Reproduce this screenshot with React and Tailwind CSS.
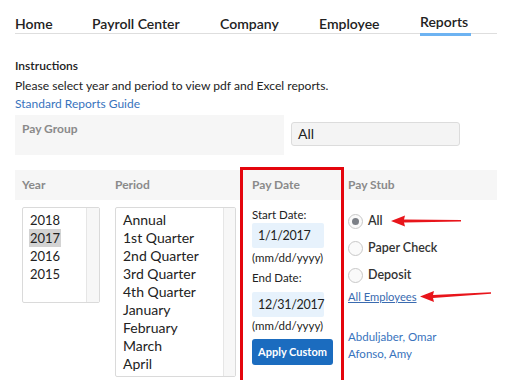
import React from 'react';

const years = ['2018', '2017', '2016', '2015'];
const periods = ['Annual', '1st Quarter', '2nd Quarter', '3rd Quarter', '4th Quarter', 'January', 'February', 'March', 'April'];
const navItems = [
  { label: 'Home', w: 'w-[77px]' },
  { label: 'Payroll Center', w: 'w-[128px]' },
  { label: 'Company', w: 'w-[99px]' },
  { label: 'Employee', w: 'w-[101px]' },
];

function Radio({ checked, label }) {
  return (
    <label className="flex items-center gap-[5px] h-[16px]">
      <span className="w-[15px] h-[15px] rounded-full border border-[#c8c8c8] bg-[#fafafa] flex items-center justify-center">
        {checked && <span className="w-[7px] h-[7px] rounded-full bg-[#7b7f86]" />}
      </span>
      <span className="text-[12.5px] font-semibold text-[#333]">{label}</span>
    </label>
  );
}

function Arrows() {
  // annotation arrows drawn over the screenshot
  return (
    <svg className="absolute left-0 top-0 pointer-events-none" width="509" height="380" aria-hidden="true">
      <path d="M391 221 L405 215.5 L404 219.5 L461 220 L461 221.5 L404 222.5 L405 226.5 Z" fill="#e8151b" />
      <path d="M420 296.5 L434 291 L433 295 L491 292.3 L491 293.8 L433 298 L434 302 Z" fill="#e8151b" />
    </svg>
  );
}

export default function App() {
  return (
    <div className="relative w-[509px] h-[380px] overflow-hidden bg-white text-[#222] font-['Lato','Open_Sans',sans-serif]">
      {/* tabs */}
      <nav className="ml-[15px] mt-[13px] w-[482px] h-[21px] border-b border-[#dedede] flex items-end">
        {navItems.map((n) => (
          <div key={n.label} className={`${n.w} text-[14px] font-semibold leading-[18px] whitespace-nowrap`}>
            {n.label}
          </div>
        ))}
        <div className="relative text-[14px] font-semibold leading-[18px] pb-[2px] whitespace-nowrap">
          Reports
          <div className="absolute left-0 right-[-3px] bottom-[-3px] h-[3px] bg-[#6db3f2]" />
        </div>
      </nav>

      {/* instructions */}
      <div className="ml-[15px] mt-[24px]">
        <div className="text-[12px] font-semibold leading-[16px]">Instructions</div>
        <div className="text-[12.1px] leading-[18px] mt-[3px]">Please select year and period to view pdf and Excel reports.</div>
        <a className="block text-[12px] leading-[17px] text-[#3873bd]">Standard Reports Guide</a>
      </div>

      {/* pay group */}
      <div className="flex ml-[15px] mt-[3px]">
        <div className="w-[269px] h-[40px] bg-[#f6f6f6] px-[7px] pt-[5px] text-[12px] font-bold text-[#8a8a8a]">Pay Group</div>
        <div className="ml-[7px] mt-[7px] w-[169px] h-[24px] rounded-[3px] border border-[#dcdcdc] bg-[#f4f4f4] px-[6px] text-[14px] leading-[22px]">All</div>
      </div>

      {/* column headers */}
      <div className="ml-[15px] mt-[15px] w-[482px] h-[30px] bg-[#f6f6f6] pl-[7px] flex items-center text-[12px] font-bold text-[#8a8a8a]">
        <div className="w-[93px]">Year</div>
        <div className="w-[137px]">Period</div>
        <div className="w-[96px]">Pay Date</div>
        <div>Pay Stub</div>
      </div>

      {/* columns */}
      <div className="flex ml-[22px] mt-[7px]">
        <div className="w-[78px] h-[96px] border border-[#dadada] rounded-[2px] flex">
          <div className="flex-1 pt-[3px] pl-[6px]">
            {years.map((y) => (
              <div key={y} className={`text-[13px] leading-[18px] w-[32px] pl-[1px] ${y === '2017' ? 'bg-[#d3d3d3]' : ''}`}>{y}</div>
            ))}
          </div>
          <div className="w-[13px] border-l border-[#e6e6e6] bg-[#f7f7f7]" />
        </div>

        <div className="ml-[15px] w-[121px] h-[170px] border border-[#dadada] rounded-[2px] flex">
          <div className="flex-1 pt-[3px] pl-[7px]">
            {periods.map((p) => (
              <div key={p} className="text-[14px] leading-[18px] whitespace-nowrap">{p}</div>
            ))}
          </div>
          <div className="w-[12px] border-l border-[#e6e6e6] bg-[#f7f7f7]" />
        </div>

        <div className="ml-[16px] w-[96px] text-[11.5px]">
          <div className="leading-[16px]">Start Date:</div>
          <div className="mt-[0px] w-[72px] h-[25px] bg-[#e7f2fc] rounded-[2px] pl-[6px] text-[12.5px] tracking-[-0.3px] leading-[25px]">1/1/2017</div>
          <div className="leading-[18px] mt-[1px]">(mm/dd/yyyy)</div>
          <div className="leading-[18px] mt-[2px]">End Date:</div>
          <div className="mt-[5px] w-[72px] h-[25px] bg-[#e7f2fc] rounded-[2px] pl-[6px] text-[12.5px] tracking-[-0.3px] leading-[25px]">12/31/2017</div>
          <div className="leading-[18px] mt-[0px]">(mm/dd/yyyy)</div>
          <button className="mt-[4px] w-[81px] h-[26px] rounded-[3px] bg-[#1b6cbf] text-white text-[11px] font-bold">Apply Custom</button>
        </div>

        <div className="flex flex-col">
          <div className="mt-[6px] flex flex-col gap-[11px]">
            <Radio checked label="All" />
            <Radio label="Paper Check" />
            <Radio label="Deposit" />
          </div>
          <a className="mt-[6px] text-[11.2px] leading-[15px] text-[#3a6bb0] underline">All Employees</a>
          <div className="mt-[24px] text-[11.5px] leading-[17px] text-[#3873bd]">
            <div>Abduljaber, Omar</div>
            <div>Afonso, Amy</div>
          </div>
        </div>
      </div>

      {/* red highlight box */}
      <div className="absolute left-[240px] top-[167px] w-[104px] h-[240px] border-[3px] border-[#e4050d] pointer-events-none" />
      <Arrows />
    </div>
  );
}
